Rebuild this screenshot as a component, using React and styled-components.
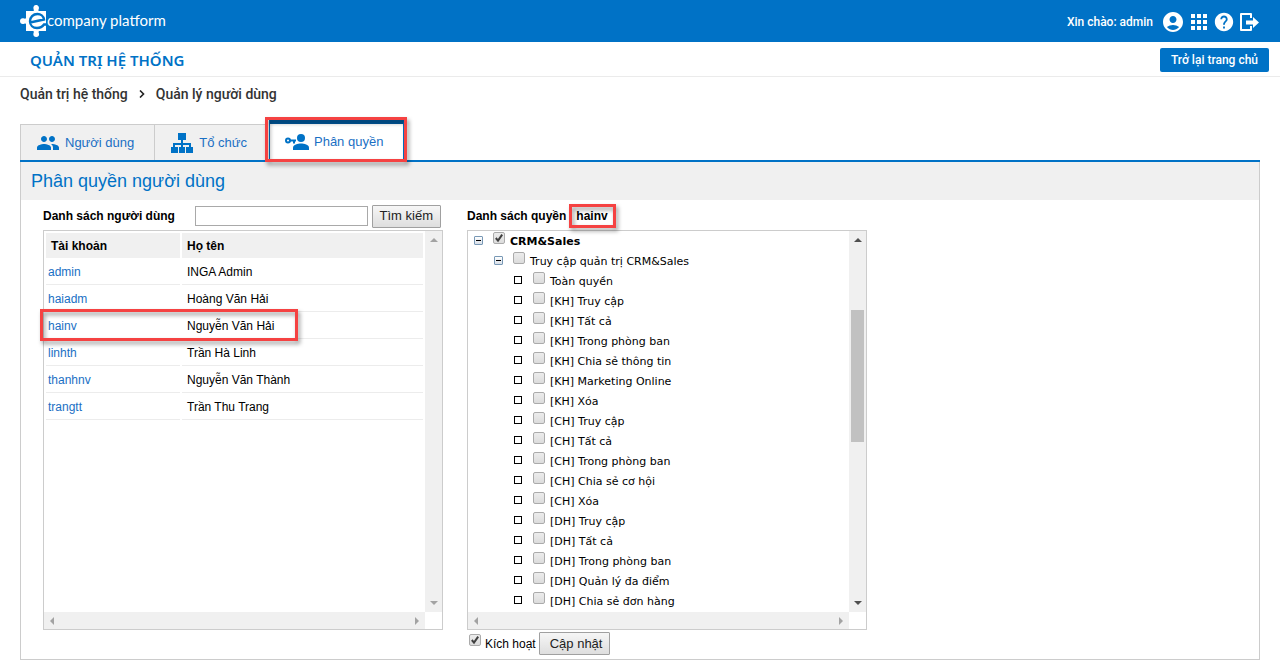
import React, { useState } from "react";
import styled, { createGlobalStyle, css } from "styled-components";
import { MdAccountCircle, MdApps, MdHelp, MdPeople } from "react-icons/md";

const blue = "#0072c6";
const sans = `"Liberation Sans", Arial, sans-serif`;

const GlobalStyle = createGlobalStyle`
    * {
        box-sizing: border-box;
    }

    body {
        margin: 0;
        background: #fff;
        color: #000;
        font: 12px/16px ${sans};
    }
`

// Callout frame laid over the content it points at
const Callout = styled.span`
    position: absolute;
    inset: ${props => props.$inset};
    border: 3px solid #f54242;
    filter: drop-shadow(2px 3px 2px rgba(0, 0, 0, 0.4));
    pointer-events: none;
    z-index: 1;
`

const TopBar = styled.header`
    display: flex;
    align-items: center;
    justify-content: space-between;
    height: 42px;
    padding: 0 20px;
    background: ${blue};
    color: #fff;
`

const Brand = styled.a`
    display: flex;
    align-items: center;
    color: #fff;
    font: 15px/20px "Lato", sans-serif;
    text-decoration: none;

    & span {
        padding-bottom: 2px;
    }
`

const UserBar = styled.nav`
    display: flex;
    align-items: center;
    gap: 2px;
    padding-top: 2px;
`

const Greeting = styled.span`
    margin-right: 6px;
    font: 500 12px/16px "Roboto", sans-serif;
`

const IconLink = styled.a`
    display: flex;
    color: #fff;
`

const SubBar = styled.div`
    display: flex;
    align-items: center;
    justify-content: space-between;
    height: 35px;
    padding: 2px 11px 0 30px;
    border-bottom: 1px solid #ebebeb;

    & h1 {
        margin: 0;
        color: ${blue};
        font: 600 15px/20px "Noto Sans", sans-serif;
    }
`

const HomeButton = styled.button`
    height: 24px;
    padding: 0 11px;
    border: 0;
    border-radius: 2px;
    background: ${blue};
    color: #fff;
    font: 500 12px/24px "Roboto", sans-serif;
`

const Breadcrumb = styled.nav`
    display: flex;
    align-items: center;
    gap: 11px;
    padding: 7px 20px 9px;
    font: 500 14px/20px "Roboto", sans-serif;

    & a {
        color: #333;
        text-decoration: none;
    }
`

const Main = styled.main`
    padding: 6px 20px 0;
`

const Tabs = styled.div`
    display: flex;
    align-items: flex-end;
    height: 43px;
    border-bottom: 2px solid ${blue};
`

const Tab = styled.button`
    position: relative;
    display: flex;
    align-items: center;
    gap: 5px;
    height: 36px;
    padding: 0 20px 0 15px;
    border: 1px solid #ccc;
    border-width: 1px 0 0 1px;
    background: #f0f0f0;
    color: #1a6fc4;
    font: 13px/20px ${sans};

    ${props => props.$active && css`
        height: 41px;
        margin-left: 2px;
        border: 1px solid ${blue};
        border-top: 5px solid #005a9e;
        border-bottom: 0;
        background: #fff;
    `}

    & svg {
        color: ${blue};
    }
`

const Panel = styled.section`
    border: 1px solid #ccc;
    border-top: 0;

    & h2 {
        margin: 0;
        padding: 7px 10px;
        background: #f0f0f0;
        color: ${blue};
        font: 18px/24px ${sans};
    }
`

const Columns = styled.div`
    display: flex;
    flex-wrap: wrap;
    gap: 24px;
    padding: 4px 22px;
`

const Column = styled.div`
    width: 400px;
`

const Toolbar = styled.form`
    display: flex;
    align-items: center;
    height: 24px;
    margin-bottom: 2px;
    font-weight: 700;

    & input[type="search"] {
        flex: 1;
        min-width: 0;
        height: 20px;
        margin: 0 4px 0 20px;
        padding: 0 4px;
        border: 1px solid #a9a9a9;
        background: #fff;
    }
`

const GreyButton = styled.button`
    height: 23px;
    margin-right: 2px;
    padding: 0 7px;
    border: 1px solid #a0a0a0;
    border-radius: 1px;
    background: linear-gradient(#f6f6f6, #dedede);
    color: #222;
    font: 13px/20px ${sans};
`

const Selected = styled.span`
    position: relative;
    margin-left: 10px;
`

const ScrollFrame = styled.div`
    display: grid;
    grid-template: 1fr 17px / 1fr 17px;
    height: 400px;
    border: 1px solid #ccc;
`

const ScrollContent = styled.div`
    overflow: ${props => props.$clip ? "hidden" : "visible"};
`

const Bar = styled.div`
    display: flex;
    flex-direction: ${props => props.$horizontal ? "row" : "column"};
    align-items: center;
    justify-content: space-between;
    padding: ${props => props.$horizontal ? "0 4px" : "5px 0"};
    background: #f0f0f0;
    color: ${props => props.$active ? "#505050" : "#a3a3a3"};
`

const Thumb = styled.div`
    width: 13px;
    height: 132px;
    margin-bottom: 91px;
    background: #c1c1c1;
`

const Table = styled.table`
    width: 381px;
    border-spacing: 2px;
    table-layout: fixed;

    & th {
        height: 25px;
        padding: 0 5px;
        background: #f0f0f0;
        text-align: left;
    }

    & th:first-child {
        width: 134px;
    }

    & td {
        height: 25px;
        padding: 0 5px;
        border-bottom: 1px solid #ececec;
    }

    & td:first-child {
        position: relative;
        padding: 0 2px;
    }

    & td a {
        color: #1a6fc4;
        text-decoration: none;
    }
`

const CheckLabel = styled.label`
    display: flex;
    align-items: center;
    gap: 4px;
`

const TreeRow = styled.div`
    display: flex;
    align-items: center;
    height: 20px;
    padding-left: ${props => 6 + props.$level * 20}px;
    font: ${props => props.$level ? "normal" : "bold"} 11px/20px "DejaVu Sans", sans-serif;

    & ${CheckLabel} {
        padding-top: 2px;
    }
`

const Toggle = styled.button`
    width: 9px;
    height: 9px;
    margin: 0 10px 1px 0;
    padding: 0;
    border: 1px solid #7898b5;
    border-radius: 1px;
    background: linear-gradient(#000, #000) center / 5px 1px no-repeat, linear-gradient(#fff, #d8dfe8);
`

const Leaf = styled.span`
    width: 8px;
    height: 8px;
    margin: 0 11px 2px 0;
    border: 1px solid #000;
`

const Checkbox = styled.input.attrs({ type: "checkbox" })`
    appearance: none;
    width: 12px;
    height: 12px;
    margin: 0 1px 8px 0;
    border: 1px solid #ababab;
    border-radius: 2px;
    background: linear-gradient(#ececec, #dcdcdc);

    &:checked {
        background: url("data:image/svg+xml,%3Csvg xmlns='http://www.w3.org/2000/svg' viewBox='0 0 11 11'%3E%3Cpath d='M2 5.5l2.4 2.8L9 1.8' fill='none' stroke='%23404040' stroke-width='2.2'/%3E%3C/svg%3E"), linear-gradient(#ececec, #dcdcdc);
    }
`

const Footer = styled.div`
    display: flex;
    align-items: center;
    gap: 3px;
    padding: 2px 0 0 2px;

    & ${CheckLabel} {
        gap: 3px;
    }

    & ${GreyButton} {
        padding: 0 7px 0 10px;
    }
`

const users = [
    { account: "admin", name: "INGA Admin" },
    { account: "haiadm", name: "Hoàng Văn Hải" },
    { account: "hainv", name: "Nguyễn Văn Hải", marked: true },
    { account: "linhth", name: "Trần Hà Linh" },
    { account: "thanhnv", name: "Nguyễn Văn Thành" },
    { account: "trangtt", name: "Trần Thu Trang" },
]

const permissions = [
    "Toàn quyền",
    "[KH] Truy cập",
    "[KH] Tất cả",
    "[KH] Trong phòng ban",
    "[KH] Chia sẻ thông tin",
    "[KH] Marketing Online",
    "[KH] Xóa",
    "[CH] Truy cập",
    "[CH] Tất cả",
    "[CH] Trong phòng ban",
    "[CH] Chia sẻ cơ hội",
    "[CH] Xóa",
    "[DH] Truy cập",
    "[DH] Tất cả",
    "[DH] Trong phòng ban",
    "[DH] Quản lý đa điểm",
    "[DH] Chia sẻ đơn hàng",
]

const Logo = () => (
    <svg width="27" height="32" viewBox="0 0 27 32" fill="#fff">
        <path d="M6 6h7.500c.8-1 .2-1 0-2C13 2 14 0 16 0s3.500 2 2.800 4c-.3 1-.8 1 0 2H26v20h-7c-.8 1-.3 1.500 0 2.500.5 2-.8 3.500-2.800 3.500S13 30.500 13.400 28.500c.3-1 .8-1.500 0-2.500H6v-7c-1-.8-1.500-.3-2.500 0C1.500 19.500 0 18 0 16s1.500-3.200 3.500-2.700c1 .3 1.500.8 2.500 0z"/>
        <path d="M10 17.500L24 14.500c-.5-3.500-3.500-5.500-6.500-5.500-4.500 0-7.500 3.300-7.500 7.200 0 4 3 6.800 7 6.800 3.300 0 5.500-1.300 7-3.500h3" fill="none" stroke={blue} strokeWidth="2.400"/>
    </svg>
)

const LogoutIcon = () => (
    <svg width="23" height="20" viewBox="-3 0 23 20">
        <path d="M11 6V2H1v16h10v-4" fill="none" stroke="currentColor" strokeWidth="2" strokeLinejoin="round"/>
        <path d="M6 8.500h7V5l6 5.500-6 5.500v-3.500H6z" fill="currentColor"/>
    </svg>
)

const OrgIcon = () => (
    <svg width="24" height="20" viewBox="0 0 24 20" fill="currentColor">
        <path d="M8 0h8v7h-3v3h8v4h2v6h-7v-6h3v-2h-6v2h2v6H9v-6h2v-2H5v2h3v6H1v-6h2v-4h8V7H8z"/>
    </svg>
)

const KeyUserIcon = () => (
    <svg width="24" height="18" viewBox="0 0 24 18" fill="currentColor">
        <circle cx="16" cy="5" r="4"/>
        <path d="M8 17v-2.500c0-2.700 5-4 8-4s8 1.300 8 4V17z"/>
        <path d="M4.500 6.500H11v2h-1v2H8v-2H4.500z"/>
        <circle cx="3" cy="7.500" r="2" fill="none" stroke="currentColor" strokeWidth="2"/>
    </svg>
)

const arrows = {
    up: "M0 6l4-4 4 4z",
    down: "M0 2l4 4 4-4z",
    left: "M6 0L2 4l4 4z",
    right: "M2 0l4 4-4 4z",
}

const Arrow = ({ to }) => (
    <svg width="8" height="8" viewBox="0 0 8 8" fill="currentColor"><path d={arrows[to]}/></svg>
)

const ScrollPane = ({ children, scrollable }) => (
    <ScrollFrame>
        <ScrollContent $clip={scrollable}>{children}</ScrollContent>
        <Bar $active={scrollable}>
            <Arrow to="up"/>
            {scrollable && <Thumb/>}
            <Arrow to="down"/>
        </Bar>
        <Bar $horizontal>
            <Arrow to="left"/>
            <Arrow to="right"/>
        </Bar>
    </ScrollFrame>
)

const TreeItem = ({ level, label, checked, branch }) => (
    <TreeRow $level={level}>
        {branch ? <Toggle type="button" aria-label="Thu gọn"/> : <Leaf/>}
        <CheckLabel><Checkbox defaultChecked={checked}/>{label}</CheckLabel>
    </TreeRow>
)

const App = () => {

    const [query, setQuery] = useState("");

    return (
        <>
            <GlobalStyle/>
            <TopBar>
                <Brand href="#"><Logo/><span>company platform</span></Brand>
                <UserBar>
                    <Greeting>Xin chào: admin</Greeting>
                    <IconLink href="#" aria-label="Tài khoản"><MdAccountCircle size={24}/></IconLink>
                    <IconLink href="#" aria-label="Ứng dụng"><MdApps size={24}/></IconLink>
                    <IconLink href="#" aria-label="Trợ giúp"><MdHelp size={22}/></IconLink>
                    <IconLink href="#" aria-label="Thoát"><LogoutIcon/></IconLink>
                </UserBar>
            </TopBar>

            <SubBar>
                <h1>QUẢN TRỊ HỆ THỐNG</h1>
                <HomeButton type="button">Trở lại trang chủ</HomeButton>
            </SubBar>

            <Breadcrumb>
                <a href="#">Quản trị hệ thống</a>
                <svg width="6" height="8" viewBox="0 0 6 8" fill="none" stroke="#222" strokeWidth="1.600"><path d="M1 0.500L4.500 4 1 7.500"/></svg>
                <a href="#">Quản lý người dùng</a>
            </Breadcrumb>

            <Main>
                <Tabs>
                    <Tab type="button"><MdPeople size={24}/>Người dùng</Tab>
                    <Tab type="button"><OrgIcon/>Tổ chức</Tab>
                    <Tab type="button" $active>
                        <KeyUserIcon/>Phân quyền
                        <Callout $inset="-7px -4px -2px -5px"/>
                    </Tab>
                </Tabs>

                <Panel>
                    <h2>Phân quyền người dùng</h2>
                    <Columns>
                        <Column>
                            <Toolbar onSubmit={e => e.preventDefault()}>
                                <label htmlFor="search">Danh sách người dùng</label>
                                <input id="search" type="search" value={query} onChange={e => setQuery(e.target.value)}/>
                                <GreyButton type="submit">Tìm kiếm</GreyButton>
                            </Toolbar>
                            <ScrollPane>
                                <Table>
                                    <thead>
                                        <tr><th>Tài khoản</th><th>Họ tên</th></tr>
                                    </thead>
                                    <tbody>
                                        {users.map(user => (
                                            <tr key={user.account}>
                                                <td>
                                                    <a href="#">{user.account}</a>
                                                    {user.marked && <Callout $inset="-5px -118px -3px -6px"/>}
                                                </td>
                                                <td>{user.name}</td>
                                            </tr>
                                        ))}
                                    </tbody>
                                </Table>
                            </ScrollPane>
                        </Column>

                        <Column>
                            <Toolbar as="div">
                                Danh sách quyền
                                <Selected>hainv<Callout $inset="-4px -8px -4px -7px"/></Selected>
                            </Toolbar>
                            <ScrollPane scrollable>
                                <TreeItem level={0} label="CRM&Sales" checked branch/>
                                <TreeItem level={1} label="Truy cập quản trị CRM&Sales" branch/>
                                {permissions.map(label => (
                                    <TreeItem key={label} level={2} label={label}/>
                                ))}
                            </ScrollPane>
                            <Footer>
                                <CheckLabel><Checkbox defaultChecked/>Kích hoạt</CheckLabel>
                                <GreyButton type="button">Cập nhật</GreyButton>
                            </Footer>
                        </Column>
                    </Columns>
                </Panel>
            </Main>
        </>
    )
}

export default App;
